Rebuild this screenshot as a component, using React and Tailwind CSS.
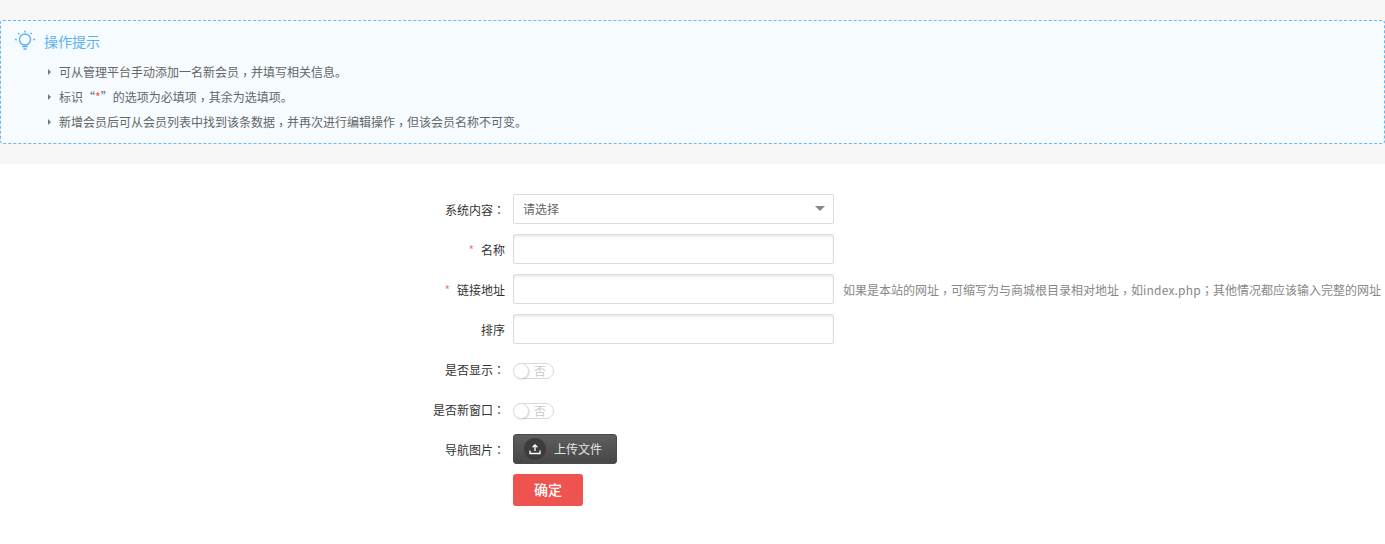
function Label({ required, children }) {
  return (
    <label className="w-[505px] shrink-0 text-right text-xs text-[#333] leading-[32px]">
      {required && <span className="text-[#f08080] mr-[7px]">*</span>}
      {children}
    </label>
  );
}

// full-width colon and comma sit centred in the reference, the SC font pushes them left
function Colon() {
  return <span className="font-['Noto_Sans_CJK_TC',sans-serif]">：</span>;
}

function Comma() {
  return <span className="relative top-[3px] font-['Noto_Sans_CJK_TC',sans-serif]">，</span>;
}

function TextInput() {
  return (
    <input
      type="text"
      className="w-[321px] h-[30px] bg-white border border-[#dcdcdc] rounded-[2px] shadow-[inset_0_2px_2px_rgba(0,0,0,0.08)] outline-none"
    />
  );
}

function Toggle() {
  return (
    <div className="relative w-[41px] h-[16px] mt-[9px] border border-[#d9d9d9] rounded-full bg-white">
      <span className="absolute left-[-1px] top-[-1px] w-[16px] h-[16px] rounded-full bg-white border border-[#dedede] shadow-[1px_1px_1px_rgba(0,0,0,0.1)]" />
      <span className="absolute left-[20px] top-[-1px] text-xs leading-[16px] text-[#ccc]">否</span>
    </div>
  );
}

function Tip({ children }) {
  return (
    <li className="flex items-center h-[25px] text-xs text-[#666]">
      <span className="w-0 h-0 mr-[8px] border-y-[3px] border-y-transparent border-l-[3px] border-l-[#777]" />
      <span>{children}</span>
    </li>
  );
}

export default function App() {
  return (
    <div className="min-h-[544px] bg-white font-['Noto_Sans_CJK_SC','Noto_Sans',sans-serif]">
      <div className="bg-[#f7f7f7] pt-[20px] pb-[20px]">
        <div className="h-[124px] bg-[#f5fbff] border border-dashed border-[#6bb8f5] rounded-[3px] pt-[9px]">
          <div className="flex items-center h-[22px] pl-[13px]">
            <svg width="22" height="22" viewBox="0 0 22 22" fill="none" stroke="#5cb1f5" strokeWidth="1.4">
              <circle cx="11" cy="9.5" r="5.5" />
              <path d="M8.2 16.5h5.6M9.5 19h3" />
              <path d="M11 0.5v2M2.8 9.5H1M21 9.5h-1.8M4.2 3l1.2 1.2M17.8 3l-1.2 1.2" />
            </svg>
            <span className="ml-[8px] text-sm text-[#5cb1f5]">操作提示</span>
          </div>
          <ul className="mt-[7px] pl-[47px]">
            <Tip>可从管理平台手动添加一名新会员<Comma />并填写相关信息。</Tip>
            <Tip>
              标识“<span className="text-[#ef5350]">*</span>”的选项为必填项<Comma />其余为选填项。
            </Tip>
            <Tip>新增会员后可从会员列表中找到该条数据<Comma />并再次进行编辑操作<Comma />但该会员名称不可变。</Tip>
          </ul>
        </div>
      </div>

      <form className="pt-[30px] flex flex-col gap-[10px]">
        <div className="flex gap-[8px] h-[30px]">
          <Label>系统内容<Colon /></Label>
          <div className="relative w-[321px] h-[30px] border border-[#dcdcdc] rounded-[2px] bg-white pl-[9px] text-xs leading-[28px] text-[#666]">
            请选择
            <span className="absolute right-[8px] top-[11px] w-0 h-0 border-x-[5px] border-x-transparent border-t-[5px] border-t-[#888]" />
          </div>
        </div>
        <div className="flex gap-[8px] h-[30px]">
          <Label required>名称</Label>
          <TextInput />
        </div>
        <div className="flex gap-[8px] h-[30px]">
          <Label required>链接地址</Label>
          <TextInput />
          <span className="ml-[1px] text-xs leading-[32px] text-[#888] whitespace-nowrap">
            如果是本站的网址<Comma />可缩写为与商城根目录相对地址<Comma />如<span className="tracking-[0.2px]">index.php</span>
            <span className="font-['Noto_Sans_CJK_TC',sans-serif]">；</span>其他情况都应该输入完整的网址
          </span>
        </div>
        <div className="flex gap-[8px] h-[30px]">
          <Label>排序</Label>
          <TextInput />
        </div>
        <div className="flex gap-[8px] h-[30px]">
          <Label>是否显示<Colon /></Label>
          <Toggle />
        </div>
        <div className="flex gap-[8px] h-[30px]">
          <Label>是否新窗口<Colon /></Label>
          <Toggle />
        </div>
        <div className="flex gap-[8px] h-[30px]">
          <Label>导航图片<Colon /></Label>
          <button type="button" className="flex items-center w-[104px] h-[30px] pl-[10px] rounded-[3px] border border-[#4a4a4a] bg-gradient-to-b from-[#5e5e5e] to-[#474747] text-xs text-[#e4e4e4]">
            <span className="flex items-center justify-center w-[22px] h-[22px] rounded-full bg-[#3c3c3c]">
              <svg width="14" height="14" viewBox="0 0 14 14" fill="none" stroke="#fff" strokeWidth="1.3">
                <path d="M7 9V3M4.6 5.2 7 2.8l2.4 2.4" />
                <path d="M2 8.5v3h10v-3" />
              </svg>
            </span>
            <span className="ml-[8px]">上传文件</span>
          </button>
        </div>
        <div className="flex gap-[8px]">
          <div className="w-[505px] shrink-0" />
          <button type="button" className="w-[70px] h-[32px] pb-[2px] rounded-[3px] bg-[#ef5350] text-sm font-medium text-white">确定</button>
        </div>
      </form>
    </div>
  );
}
